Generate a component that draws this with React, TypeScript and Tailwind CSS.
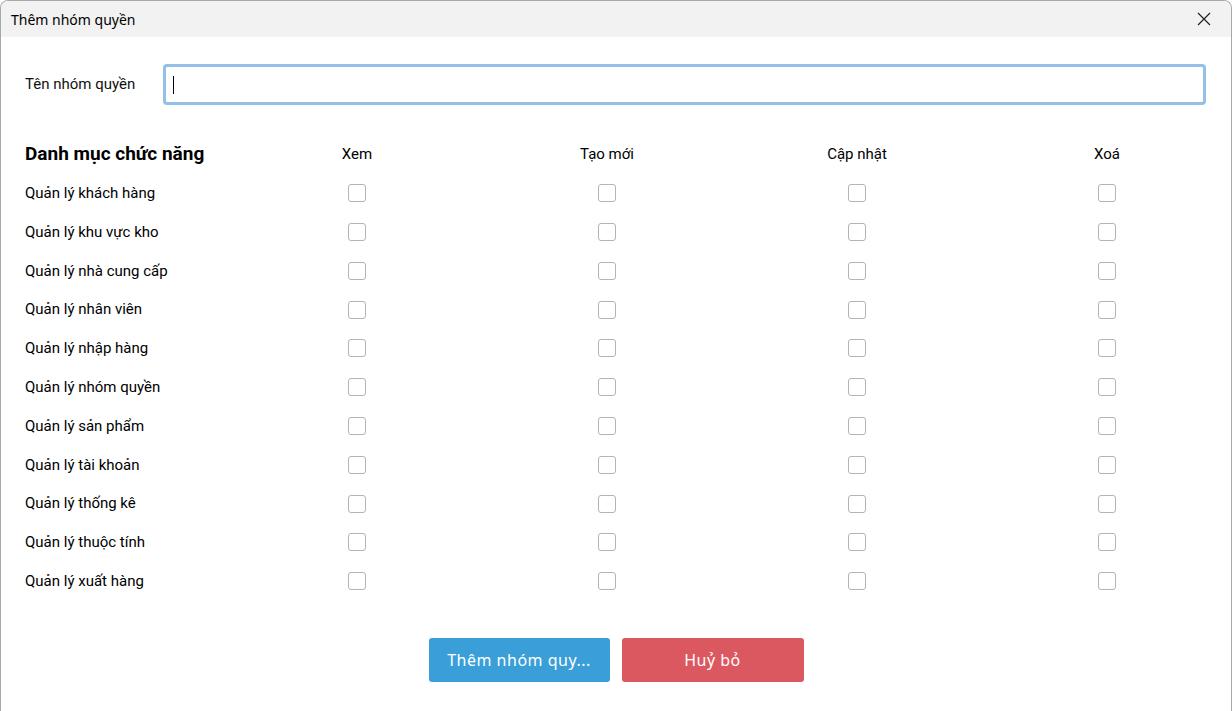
import React from 'react';

const rows = [
  'Quản lý khách hàng',
  'Quản lý khu vực kho',
  'Quản lý nhà cung cấp',
  'Quản lý nhân viên',
  'Quản lý nhập hàng',
  'Quản lý nhóm quyền',
  'Quản lý sản phẩm',
  'Quản lý tài khoản',
  'Quản lý thống kê',
  'Quản lý thuộc tính',
  'Quản lý xuất hàng',
];

const cols = ['Xem', 'Tạo mới', 'Cập nhật', 'Xoá'];

function Box() {
  return <span className="block w-[18px] h-[18px] rounded-[3px] border border-[#b4b4b4] bg-white" />;
}

export default function App() {
  return (
    <div className="w-[1232px] h-[711px] bg-white overflow-hidden rounded-t-[8px] border-t border-x border-[#a8a8a8] flex flex-col text-[#111]" style={{ fontFamily: 'Roboto, "Noto Sans", sans-serif' }}>
      <div className="h-[36px] shrink-0 bg-[#f2f2f2] flex items-center justify-between pl-[10px] pr-[20px]">
        <span className="text-[14px] text-black" style={{ fontFamily: '"Noto Sans", sans-serif' }}>Thêm nhóm quyền</span>
        <svg width="14" height="14" viewBox="0 0 14 14" className="text-[#222]">
          <path d="M1 1 L13 13 M13 1 L1 13" stroke="currentColor" strokeWidth="1.2" />
        </svg>
      </div>

      <div className="flex items-center pl-[24px] pr-[25px] mt-[27px]">
        <span className="w-[138px] text-[15px]">Tên nhóm quyền</span>
        <div className="flex-1 h-[41px] rounded-[4px] border-[3px] border-[#94c0e8] flex items-center pl-[7px]">
          <span className="block w-px h-[18px] bg-black" />
        </div>
      </div>

      <div className="grid grid-cols-[207px_repeat(4,250px)] pl-[24px] mt-[30px] auto-rows-[38.8px] items-center">
        <span className="text-[19px] font-bold text-black">Danh mục chức năng</span>
        {cols.map((c) => (
          <span key={c} className="text-[15px] text-center text-black">{c}</span>
        ))}
        {rows.map((r) => (
          <React.Fragment key={r}>
            <span className="text-[15px] text-black">{r}</span>
            {cols.map((c) => (
              <div key={c} className="flex justify-center"><Box /></div>
            ))}
          </React.Fragment>
        ))}
      </div>

      <div className="flex justify-center gap-[12px] mt-[37px]" style={{ fontFamily: '"Noto Sans", sans-serif' }}>
        <button className="w-[181px] h-[44px] rounded-[3px] bg-[#3a9fd8] text-white text-[16px] tracking-[0.5px]">Thêm nhóm quy...</button>
        <button className="w-[182px] h-[44px] rounded-[3px] bg-[#dc5861] text-white text-[16px] tracking-[0.5px]">Huỷ bỏ</button>
      </div>
    </div>
  );
}
